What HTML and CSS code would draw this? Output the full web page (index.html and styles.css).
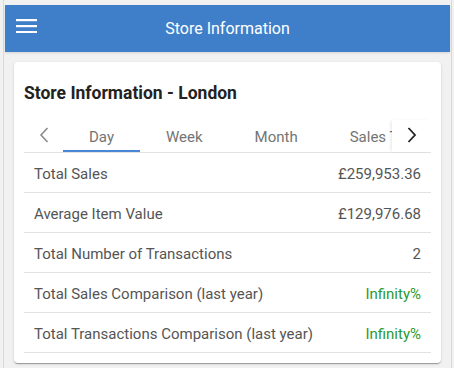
FILE: index.html
```html
<!DOCTYPE html>
<html lang="en">
<head>
<meta charset="utf-8">
<title>Store Information</title>
<link rel="stylesheet" href="styles.css">
</head>
<body>
<div class="frame">
  <header class="toolbar">
    <button class="menu-btn" aria-label="Menu">
      <svg width="21" height="14" viewBox="0 0 21 14"><rect x="0" y="0" width="21" height="2.2" fill="#fff"/><rect x="0" y="6" width="21" height="2.2" fill="#fff"/><rect x="0" y="12" width="21" height="2.2" fill="#fff"/></svg>
    </button>
    <h1 class="toolbar-title">Store Information</h1>
  </header>
  <main class="content">
    <section class="card">
      <h2 class="card-title">Store Information - London</h2>
      <div class="tabs">
        <div class="arrow arrow-disabled">
          <svg width="10" height="16" viewBox="0 0 10 16"><path d="M8.5 1 L2 8 L8.5 15" fill="none" stroke="#8a8a8a" stroke-width="1.6"/></svg>
        </div>
        <div class="tab-list">
          <div class="tab active">Day</div>
          <div class="tab">Week</div>
          <div class="tab">Month</div>
          <div class="tab">Sales Trend</div>
        </div>
        <div class="arrow arrow-right">
          <svg width="10" height="16" viewBox="0 0 10 16"><path d="M1.5 1 L8 8 L1.5 15" fill="none" stroke="#222" stroke-width="1.8"/></svg>
        </div>
      </div>
      <div class="rows">
        <div class="row"><span>Total Sales</span><span>£259,953.36</span></div>
        <div class="row"><span>Average Item Value</span><span>£129,976.68</span></div>
        <div class="row"><span>Total Number of Transactions</span><span>2</span></div>
        <div class="row"><span>Total Sales Comparison (last year)</span><span class="good">Infinity%</span></div>
        <div class="row"><span>Total Transactions Comparison (last year)</span><span class="good">Infinity%</span></div>
      </div>
    </section>
  </main>
</div>
</body>
</html>
```
FILE: styles.css
```css
html, body {
  margin: 0;
  padding: 0;
  background: #f1f1f1;
  font-family: Roboto, "Noto Sans", sans-serif;
  height: 100%;
}

.frame {
  margin-left: 3px;
  width: 449px;
  min-height: 100%;
  box-sizing: border-box;
  border-left: 1px solid #d9d9d9;
  border-right: 1px solid #d9d9d9;
  padding: 5px 1px 0 1px;
}

.toolbar {
  height: 47px;
  background: #3f7fca;
  display: flex;
  align-items: center;
  position: relative;
  box-shadow: 0 1px 2px rgba(0,0,0,0.12);
}

.menu-btn {
  border: 0;
  background: transparent;
  padding: 0;
  margin-left: 11px;
  margin-top: -5px;
  width: 21px;
  height: 14px;
  display: flex;
}

.toolbar-title {
  flex: 1;
  margin: 0 32px 0 0;
  text-align: center;
  color: #fff;
  font-size: 16px;
  font-weight: 400;
}

.content {
  padding: 10px 9px 0 9px;
}

.card {
  background: #fff;
  border-radius: 4px;
  box-shadow: 0 2px 1px -1px rgba(0,0,0,.2), 0 1px 1px 0 rgba(0,0,0,.14), 0 1px 3px 0 rgba(0,0,0,.12);
  padding: 19px 10px 10px 10px;
}

.card-title {
  margin: 0 0 15px 0;
  font-size: 17.5px;
  line-height: 24px;
  font-weight: 700;
  color: #222;
}

.tabs {
  display: flex;
  height: 32px;
  border-bottom: 1px solid #e2e2e2;
}

.arrow {
  width: 39px;
  flex: none;
  display: flex;
  align-items: center;
  justify-content: center;
  padding-bottom: 2px;
  box-sizing: border-box;
  background: #fff;
}

.arrow-right {
  box-shadow: -2px 0 3px -1px rgba(0,0,0,0.10);
  position: relative;
  z-index: 1;
}

.tab-list {
  flex: 1;
  display: flex;
  overflow: hidden;
}

.tab {
  flex: none;
  padding: 7px 26px 0 26px;
  height: 32px;
  box-sizing: border-box;
  line-height: 20px;
  font-size: 15px;
  color: #747474;
  white-space: nowrap;
  border-bottom: 2px solid transparent;
}

.tab.active {
  border-bottom-color: #4a86d6;
}

.rows {
  display: flex;
  flex-direction: column;
}

.row {
  display: flex;
  justify-content: space-between;
  height: 40px;
  box-sizing: border-box;
  padding: 11px 10px 0 10px;
  line-height: 20px;
  font-size: 15px;
  color: #555;
  border-bottom: 1px solid #e2e2e2;
}

.good {
  color: #2c9b2c;
}
```
